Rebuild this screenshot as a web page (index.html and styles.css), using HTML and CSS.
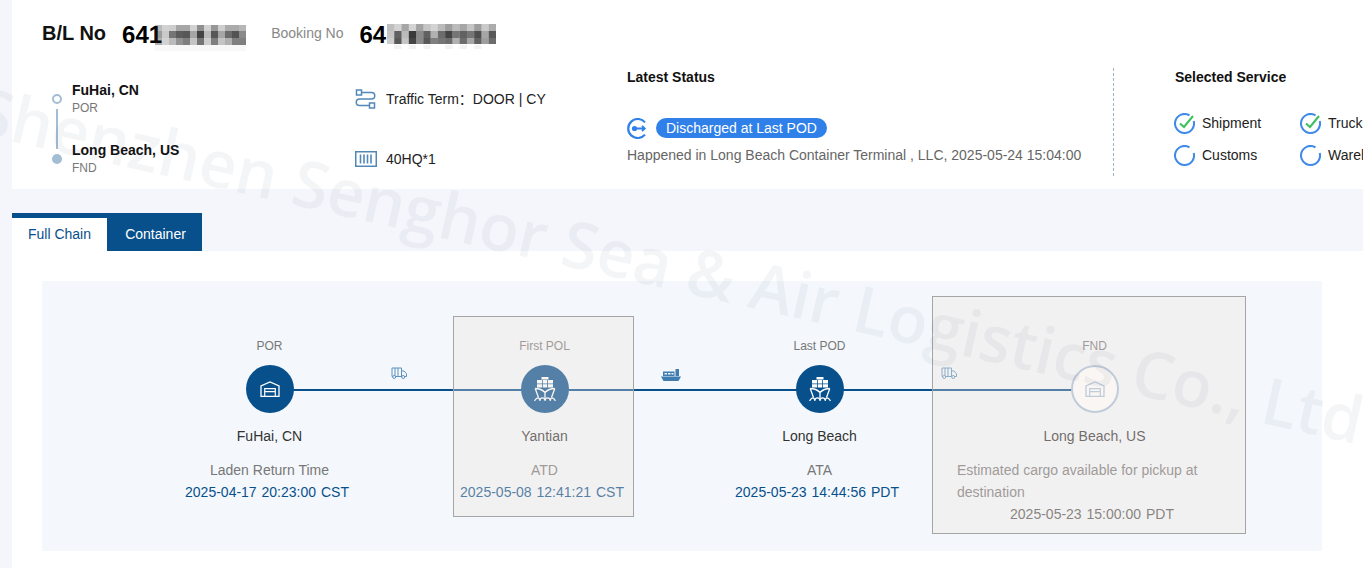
FILE: index.html
```html
<!DOCTYPE html>
<html lang="en">
<head>
<meta charset="utf-8">
<title>Tracking</title>
<link rel="stylesheet" href="styles.css">
</head>
<body>
<svg class="defs" width="0" height="0" aria-hidden="true">
  <symbol id="warehouse" viewBox="0 0 20 16"><path d="M1 15.300V5L10 .9 19 5v10.300z" fill="none" stroke="currentColor" stroke-width="1.300"/><path d="M4.700 15.300V7.600h10.600v7.700M4.700 10.600h10.600" fill="none" stroke="currentColor" stroke-width="1.200"/></symbol>
  <symbol id="ship" viewBox="0 0 22 25">
    <path d="M7.500 0h7v2.500h-7z" fill="currentColor"/>
    <path d="M3 3h5v3.500H3zM8.800 3h4.400v3.500H8.800zM14 3h5v3.500h-5zM3 7.300h5v3.200H3zM8.800 7.300h4.400v3.200H8.800zM14 7.300h5v3.200h-5z" fill="currentColor"/>
    <path d="M1.200 11.500 4.500 20.500M20.800 11.500 17.500 20.500M1.200 11.500c4 0 7.400 1.500 9.800 4 2.400-2.500 5.800-4 9.800-4M11 15.500v6" fill="none" stroke="currentColor" stroke-width="1.300"/>
    <path d="M.5 23.800c2.500-3.800 4.800-3.800 5.250 0 .5-3.800 4.800-3.800 5.250 0 .5-3.800 4.800-3.800 5.250 0 .5-3.800 2.800-3.800 5.250 0" fill="none" stroke="currentColor" stroke-width="1.200"/>
  </symbol>
  <symbol id="truck" viewBox="0 0 16 12"><path d="M1 1h9.500v8.500H1zM4 1v8.500M7 1v8.500M10.500 4h2.600l2.400 2.800v2.700h-5z" fill="none" stroke="currentColor" stroke-width="1"/><circle cx="3.200" cy="10" r="1.500" fill="#f4f8fc" stroke="currentColor"/><circle cx="12.200" cy="10" r="1.500" fill="#f4f8fc" stroke="currentColor"/></symbol>
  <symbol id="freighter" viewBox="0 0 20 12"><path d="M0 7.500h20l-2.500 4.500h-15z" fill="currentColor"/><path d="M14.500 0h3.500v7h-3.500z" fill="currentColor"/><path d="M2 2.500h11.500v4.500H2z" fill="currentColor"/><path d="M3.500 4h2.500v1.500H3.500zM7 4h2.500v1.500H7zM10.500 4H12.500v1.500h-2z" fill="#f4f8fc"/></symbol>
  <symbol id="arc" viewBox="0 0 21 21"><path d="M15.500 2.400A9.500 9.500 0 1 0 19.700 8" fill="none" stroke="#3f8ae8" stroke-width="2"/></symbol>
  <symbol id="tick" viewBox="0 0 21 21"><path d="M6 10.500l4 3.500 9-11" fill="none" stroke="#3cc05c" stroke-width="2"/></symbol>
</svg>

<div class="page">
  <header class="summary">
    <div class="title-row">
      <span class="bl-label">B/L No</span>
      <span class="number">641</span>
      <svg class="mosaic mosaic-a" width="91" height="28" viewBox="0 0 91 28" fill="#1c1c1c" aria-hidden="true">
        <rect x="0" y="0" width="91" height="20" opacity=".13"/>
        <g>
          <rect x="0" y="0" width="7" height="6" opacity=".2"/><rect x="7" y="0" width="7" height="6" opacity=".08"/><rect x="14" y="0" width="7" height="6" opacity=".1"/><rect x="21" y="0" width="7" height="6" opacity=".3"/><rect x="28" y="0" width="7" height="6" opacity=".3"/><rect x="35" y="0" width="7" height="6" opacity=".08"/><rect x="42" y="0" width="7" height="6" opacity=".42"/><rect x="49" y="0" width="7" height="6" opacity=".08"/><rect x="56" y="0" width="7" height="6" opacity=".38"/><rect x="63" y="0" width="7" height="6" opacity=".1"/><rect x="70" y="0" width="7" height="6" opacity=".28"/><rect x="77" y="0" width="7" height="6" opacity=".28"/><rect x="84" y="0" width="7" height="6" opacity=".22"/>
          <rect x="0" y="6" width="7" height="7" opacity=".35"/><rect x="7" y="6" width="7" height="7" opacity=".12"/><rect x="14" y="6" width="7" height="7" opacity=".55"/><rect x="21" y="6" width="7" height="7" opacity=".68"/><rect x="28" y="6" width="7" height="7" opacity=".7"/><rect x="35" y="6" width="7" height="7" opacity=".3"/><rect x="42" y="6" width="7" height="7" opacity=".8"/><rect x="49" y="6" width="7" height="7" opacity=".2"/><rect x="56" y="6" width="7" height="7" opacity=".7"/><rect x="63" y="6" width="7" height="7" opacity=".3"/><rect x="70" y="6" width="7" height="7" opacity=".6"/><rect x="77" y="6" width="7" height="7" opacity=".72"/><rect x="84" y="6" width="7" height="7" opacity=".45"/>
          <rect x="0" y="13" width="7" height="7" opacity=".25"/><rect x="7" y="13" width="7" height="7" opacity=".08"/><rect x="14" y="13" width="7" height="7" opacity=".2"/><rect x="21" y="13" width="7" height="7" opacity=".4"/><rect x="28" y="13" width="7" height="7" opacity=".5"/><rect x="35" y="13" width="7" height="7" opacity=".15"/><rect x="42" y="13" width="7" height="7" opacity=".55"/><rect x="49" y="13" width="7" height="7" opacity=".1"/><rect x="56" y="13" width="7" height="7" opacity=".5"/><rect x="63" y="13" width="7" height="7" opacity=".15"/><rect x="70" y="13" width="7" height="7" opacity=".25"/><rect x="77" y="13" width="7" height="7" opacity=".5"/><rect x="84" y="13" width="7" height="7" opacity=".5"/>
          <rect x="0" y="20" width="91" height="6" opacity=".03"/>
        </g>
      </svg>
      <span class="booking-label">Booking No</span>
      <span class="number">64</span>
      <svg class="mosaic mosaic-b" width="109" height="26" viewBox="0 0 105 26" preserveAspectRatio="none" fill="#1c1c1c" aria-hidden="true">
        <rect x="0" y="0" width="105" height="20" opacity=".12"/>
        <g>
          <rect x="0" y="0" width="7" height="7" opacity=".18"/><rect x="7" y="0" width="7" height="7" opacity=".08"/><rect x="14" y="0" width="7" height="7" opacity=".3"/><rect x="21" y="0" width="7" height="7" opacity=".08"/><rect x="28" y="0" width="7" height="7" opacity=".32"/><rect x="35" y="0" width="7" height="7" opacity=".15"/><rect x="42" y="0" width="7" height="7" opacity=".08"/><rect x="49" y="0" width="7" height="7" opacity=".2"/><rect x="56" y="0" width="7" height="7" opacity=".35"/><rect x="63" y="0" width="7" height="7" opacity=".2"/><rect x="70" y="0" width="7" height="7" opacity=".3"/><rect x="77" y="0" width="7" height="7" opacity=".15"/><rect x="84" y="0" width="7" height="7" opacity=".35"/><rect x="91" y="0" width="7" height="7" opacity=".12"/><rect x="98" y="0" width="7" height="7" opacity=".28"/>
          <rect x="0" y="7" width="7" height="7" opacity=".15"/><rect x="7" y="7" width="7" height="7" opacity=".65"/><rect x="14" y="7" width="7" height="7" opacity=".2"/><rect x="21" y="7" width="7" height="7" opacity=".85"/><rect x="28" y="7" width="7" height="7" opacity=".45"/><rect x="35" y="7" width="7" height="7" opacity=".65"/><rect x="42" y="7" width="7" height="7" opacity=".25"/><rect x="49" y="7" width="7" height="7" opacity=".6"/><rect x="56" y="7" width="7" height="7" opacity=".8"/><rect x="63" y="7" width="7" height="7" opacity=".55"/><rect x="70" y="7" width="7" height="7" opacity=".65"/><rect x="77" y="7" width="7" height="7" opacity=".55"/><rect x="84" y="7" width="7" height="7" opacity=".75"/><rect x="91" y="7" width="7" height="7" opacity=".3"/><rect x="98" y="7" width="7" height="7" opacity=".7"/>
          <rect x="0" y="14" width="7" height="6" opacity=".1"/><rect x="7" y="14" width="7" height="6" opacity=".7"/><rect x="14" y="14" width="7" height="6" opacity=".15"/><rect x="21" y="14" width="7" height="6" opacity=".8"/><rect x="28" y="14" width="7" height="6" opacity=".45"/><rect x="35" y="14" width="7" height="6" opacity=".7"/><rect x="42" y="14" width="7" height="6" opacity=".5"/><rect x="49" y="14" width="7" height="6" opacity=".55"/><rect x="56" y="14" width="7" height="6" opacity=".6"/><rect x="63" y="14" width="7" height="6" opacity=".25"/><rect x="70" y="14" width="7" height="6" opacity=".6"/><rect x="77" y="14" width="7" height="6" opacity=".3"/><rect x="84" y="14" width="7" height="6" opacity=".65"/><rect x="91" y="14" width="7" height="6" opacity=".35"/><rect x="98" y="14" width="7" height="6" opacity=".6"/>
          <rect x="7" y="21" width="7" height="4" opacity=".05"/><rect x="21" y="21" width="7" height="4" opacity=".05"/><rect x="35" y="21" width="7" height="4" opacity=".05"/><rect x="56" y="21" width="7" height="4" opacity=".05"/><rect x="70" y="21" width="7" height="4" opacity=".05"/><rect x="84" y="21" width="7" height="4" opacity=".05"/>
        </g>
      </svg>
    </div>

    <div class="info-row">
      <div class="route">
        <div class="route-stop">
          <span class="marker"><span class="dot dot-ring"></span><span class="route-line"></span></span>
          <div><div class="place">FuHai, CN</div><div class="place-type">POR</div></div>
        </div>
        <div class="route-stop">
          <span class="marker"><span class="dot dot-solid"></span></span>
          <div><div class="place">Long Beach, US</div><div class="place-type">FND</div></div>
        </div>
      </div>

      <div class="terms">
        <div class="term">
          <svg class="term-icon" width="22" height="20" viewBox="0 0 22 20" fill="none" stroke="#5288b8" stroke-width="1.500" aria-hidden="true"><rect x="1.500" y="1" width="5" height="5"/><path d="M6.500 3.500h10a3 3 0 0 1 0 6.500h-12a3 3 0 0 0 0 6.500h10"/><rect x="14.500" y="14" width="5" height="5"/></svg>
          <span>Traffic Term：DOOR | CY</span>
        </div>
        <div class="term">
          <svg class="term-icon" width="22" height="16" viewBox="0 0 22 16" fill="none" stroke="#5288b8" aria-hidden="true"><rect x=".750" y=".750" width="20.500" height="14.500" stroke-width="1.500"/><path d="M5.500 3.500v9M9 3.500v9M12.500 3.500v9M16 3.500v9" stroke-width="1.600"/></svg>
          <span>40HQ*1</span>
        </div>
      </div>

      <div class="status">
        <div class="col-title">Latest Status</div>
        <div class="status-line">
          <svg width="21" height="21" viewBox="0 0 21 21" fill="none" stroke="#2f80e8" aria-hidden="true"><path d="M18 4.400A9.500 9.500 0 1 0 18 16.600" stroke-width="2.200"/><circle cx="7.500" cy="10.500" r="2.600" fill="#2f80e8" stroke="none"/><path d="M8 10.500h10M15 7.800l2.800 2.700-2.800 2.700" stroke-width="1.800"/></svg>
          <span class="pill">Discharged at Last POD</span>
        </div>
        <div class="status-note">Happened in Long Beach Container Terminal , LLC, 2025-05-24 15:04:00</div>
      </div>

      <div class="services">
        <div class="col-title">Selected Service</div>
        <div class="service-grid">
          <div class="service"><svg class="svc-icon" width="21" height="21" aria-hidden="true"><use href="#arc"/><use href="#tick"/></svg>Shipment</div>
          <div class="service"><svg class="svc-icon" width="21" height="21" aria-hidden="true"><use href="#arc"/><use href="#tick"/></svg>Trucking</div>
          <div class="service"><svg class="svc-icon" width="21" height="21" aria-hidden="true"><use href="#arc"/></svg>Customs</div>
          <div class="service"><svg class="svc-icon" width="21" height="21" aria-hidden="true"><use href="#arc"/></svg>Warehouse</div>
        </div>
      </div>
    </div>
  </header>

  <nav class="tabs">
    <span class="tab tab-on">Full Chain</span>
    <span class="tab tab-off">Container</span>
  </nav>

  <main class="panel">
    <div class="chain">
      <section class="step">
        <div class="step-tag">POR</div>
        <div class="node-row">
          <span class="node"><svg class="glyph-house" width="20" height="16"><use href="#warehouse"/></svg></span>
          <span class="line"><svg class="leg leg-truck" width="16" height="12"><use href="#truck"/></svg></span>
        </div>
        <div class="step-name">FuHai, CN</div>
        <div class="step-event">Laden Return Time</div>
        <div class="step-date">2025-04-17 20:23:00 CST</div>
      </section>

      <section class="step">
        <div class="step-tag">First POL</div>
        <div class="node-row">
          <span class="node"><svg class="glyph-ship" width="22" height="25"><use href="#ship"/></svg></span>
          <span class="line"><svg class="leg leg-ship" width="20" height="12"><use href="#freighter"/></svg></span>
        </div>
        <div class="step-name">Yantian</div>
        <div class="step-event">ATD</div>
        <div class="step-date">2025-05-08 12:41:21 CST</div>
        <div class="veil veil-pol"></div>
      </section>

      <section class="step">
        <div class="step-tag">Last POD</div>
        <div class="node-row">
          <span class="node"><svg class="glyph-ship" width="22" height="25"><use href="#ship"/></svg></span>
          <span class="line"><svg class="leg leg-truck" width="16" height="12"><use href="#truck"/></svg></span>
        </div>
        <div class="step-name">Long Beach</div>
        <div class="step-event">ATA</div>
        <div class="step-date">2025-05-23 14:44:56 PDT</div>
      </section>

      <section class="step">
        <div class="step-tag">FND</div>
        <div class="node-row">
          <span class="node node-open"><svg class="glyph-house" width="20" height="16"><use href="#warehouse"/></svg></span>
        </div>
        <div class="step-name">Long Beach, US</div>
        <div class="step-event step-event-left">Estimated cargo available for pickup at destination</div>
        <div class="step-date step-date-muted">2025-05-23 15:00:00 PDT</div>
        <div class="veil veil-fnd"></div>
      </section>
    </div>
  </main>

  <div class="watermark">Shenzhen Senghor Sea &amp; Air Logistics Co., Ltd</div>
</div>
</body>
</html>
```

FILE: styles.css
```css
* { box-sizing: border-box; }

html, body {
  margin: 0;
  height: 568px;
  overflow: hidden;
}

body {
  background: #f5f6fb;
  font-family: "Liberation Sans", Arial, "Noto Sans CJK SC", sans-serif;
  font-size: 14px;
  color: #222;
}

.defs { position: absolute; }

.page {
  position: relative;
  height: 568px;
  padding-left: 12px;
  overflow: hidden;
}

/* Summary */
.summary {
  height: 189px;
  padding-left: 30px;
  background: #fff;
}

.title-row {
  display: flex;
  align-items: center;
  height: 68px;
}

.bl-label {
  margin-right: 16px;
  font-size: 20px;
  font-weight: 700;
  color: #111;
  position: relative;
  top: -1px;
}

.number {
  font-size: 24px;
  font-weight: 700;
  color: #000;
  position: relative;
  top: 1px;
}

.mosaic { position: relative; }
.mosaic-a { margin: 10px 25px 0 -7px; }
.mosaic-b { margin: 6px 0 0 1px; }

.booking-label {
  margin-right: 16px;
  color: #888;
  position: relative;
  top: -1px;
}

.info-row {
  display: flex;
  height: 108px;
}

.route { width: 313px; padding-top: 12px; }

.route-stop {
  display: flex;
  height: 60px;
}

.marker {
  position: relative;
  width: 30px;
  flex: none;
}

.dot {
  position: absolute;
  left: 10px;
  top: 14px;
  width: 10px;
  height: 10px;
  border-radius: 50%;
}

.dot-ring { border: 2px solid #a3bdd4; }
.dot-solid { background: #a3bdd4; }

.route-line {
  position: absolute;
  left: 14px;
  top: 29px;
  width: 2px;
  height: 40px;
  background: #a3bdd4;
}

.place {
  font-weight: 700;
  line-height: 20px;
  color: #111;
}

.place-type {
  font-size: 12px;
  line-height: 16px;
  margin-top: 0;
  color: #777;
}

.terms {
  width: 272px;
  padding-top: 21px;
  display: flex;
  flex-direction: column;
  gap: 40px;
}

.term {
  display: flex;
  align-items: center;
  height: 20px;
  line-height: 18px;
}

.term-icon { flex: none; margin-right: 9px; }

.status {
  width: 486px;
  flex: none;
}

.col-title {
  font-weight: 700;
  line-height: 18px;
  color: #111;
}

.status-line {
  display: flex;
  align-items: flex-start;
  gap: 8px;
  margin-top: 32px;
  height: 21px;
}

.pill {
  height: 20px;
  line-height: 20px;
  padding: 0 10px;
  border-radius: 10px;
  background: #2f80e8;
  color: #fff;
}

.status-note {
  margin-top: 6px;
  line-height: 20px;
  color: #666;
  white-space: nowrap;
}

.services {
  flex: 1;
  padding-left: 61px;
  border-left: 1px dashed #9fb6c9;
  min-width: 0;
}

.service-grid {
  display: grid;
  grid-template-columns: 126px 126px;
  grid-auto-rows: 20px;
  row-gap: 12px;
  margin-top: 27px;
  margin-left: -1px;
}

.service {
  display: flex;
  align-items: center;
  white-space: nowrap;
  color: #222;
}

.svc-icon { flex: none; margin-right: 7px; }

/* Tabs */
.tabs {
  display: flex;
  width: 190px;
  margin-top: 24px;
  border-top: 5px solid #08508c;
  background: #08508c;
}

.tab {
  width: 95px;
  height: 33px;
  line-height: 33px;
  text-align: center;
  color: #fff;
}

.tab-off { padding-left: 2px; }

.tab-on {
  background: #fff;
  color: #08508c;
}

/* Chain */
.panel {
  height: 317px;
  padding: 30px 41px 0 30px;
  background: #fff;
}

.chain {
  display: grid;
  grid-template-columns: repeat(4, 275px);
  height: 270px;
  padding: 57px 0 0 90px;
  background: #f4f8fc;
}

.step {
  position: relative;
  text-align: center;
}

.step-tag {
  height: 16px;
  margin-bottom: 11px;
  font-size: 12px;
  line-height: 16px;
  color: #777;
}

.node-row {
  position: relative;
  height: 48px;
}

.node {
  position: relative;
  z-index: 1;
  display: flex;
  align-items: center;
  justify-content: center;
  width: 48px;
  height: 48px;
  margin: 0 auto;
  border-radius: 50%;
  background: #08508c;
  color: #fff;
}

.node-open {
  background: #fff;
  border: 2px solid #a9c0d8;
  color: #a9c0d8;
}

.line {
  position: absolute;
  left: 50%;
  top: 24px;
  width: 100%;
  height: 2px;
  background: #08508c;
}

.leg {
  position: absolute;
  top: -22px;
  left: 121px;
  color: #5f92c0;
}

.leg-ship {
  top: -20px;
  left: 116px;
  color: #3f7cb0;
}

.step-name {
  margin-top: 13px;
  line-height: 20px;
  color: #333;
}

.step-event {
  margin-top: 13px;
  line-height: 22px;
  color: #777;
}

.step-event-left { text-align: left; }

.step-date {
  padding-right: 5px;
  line-height: 22px;
  word-spacing: 1px;
  color: #08508c;
}

.step-date-muted { color: #555; }

.veil {
  position: absolute;
  z-index: 2;
  border: 1px solid #a5a5a5;
  background: rgba(240, 228, 222, .33);
}

.veil-pol {
  left: 46px;
  top: -22px;
  width: 181px;
  height: 201px;
}

.veil-fnd {
  left: -25px;
  top: -42px;
  width: 314px;
  height: 238px;
}

/* Watermark */
.watermark {
  position: absolute;
  z-index: 5;
  left: -14px;
  top: 74px;
  font-family: "Open Sans", "Liberation Sans", sans-serif;
  font-size: 65px;
  font-weight: 600;
  line-height: 70px;
  white-space: nowrap;
  color: rgba(40, 50, 90, .05);
  transform: rotate(12.700deg);
  transform-origin: 0 0;
  pointer-events: none;
}
```
